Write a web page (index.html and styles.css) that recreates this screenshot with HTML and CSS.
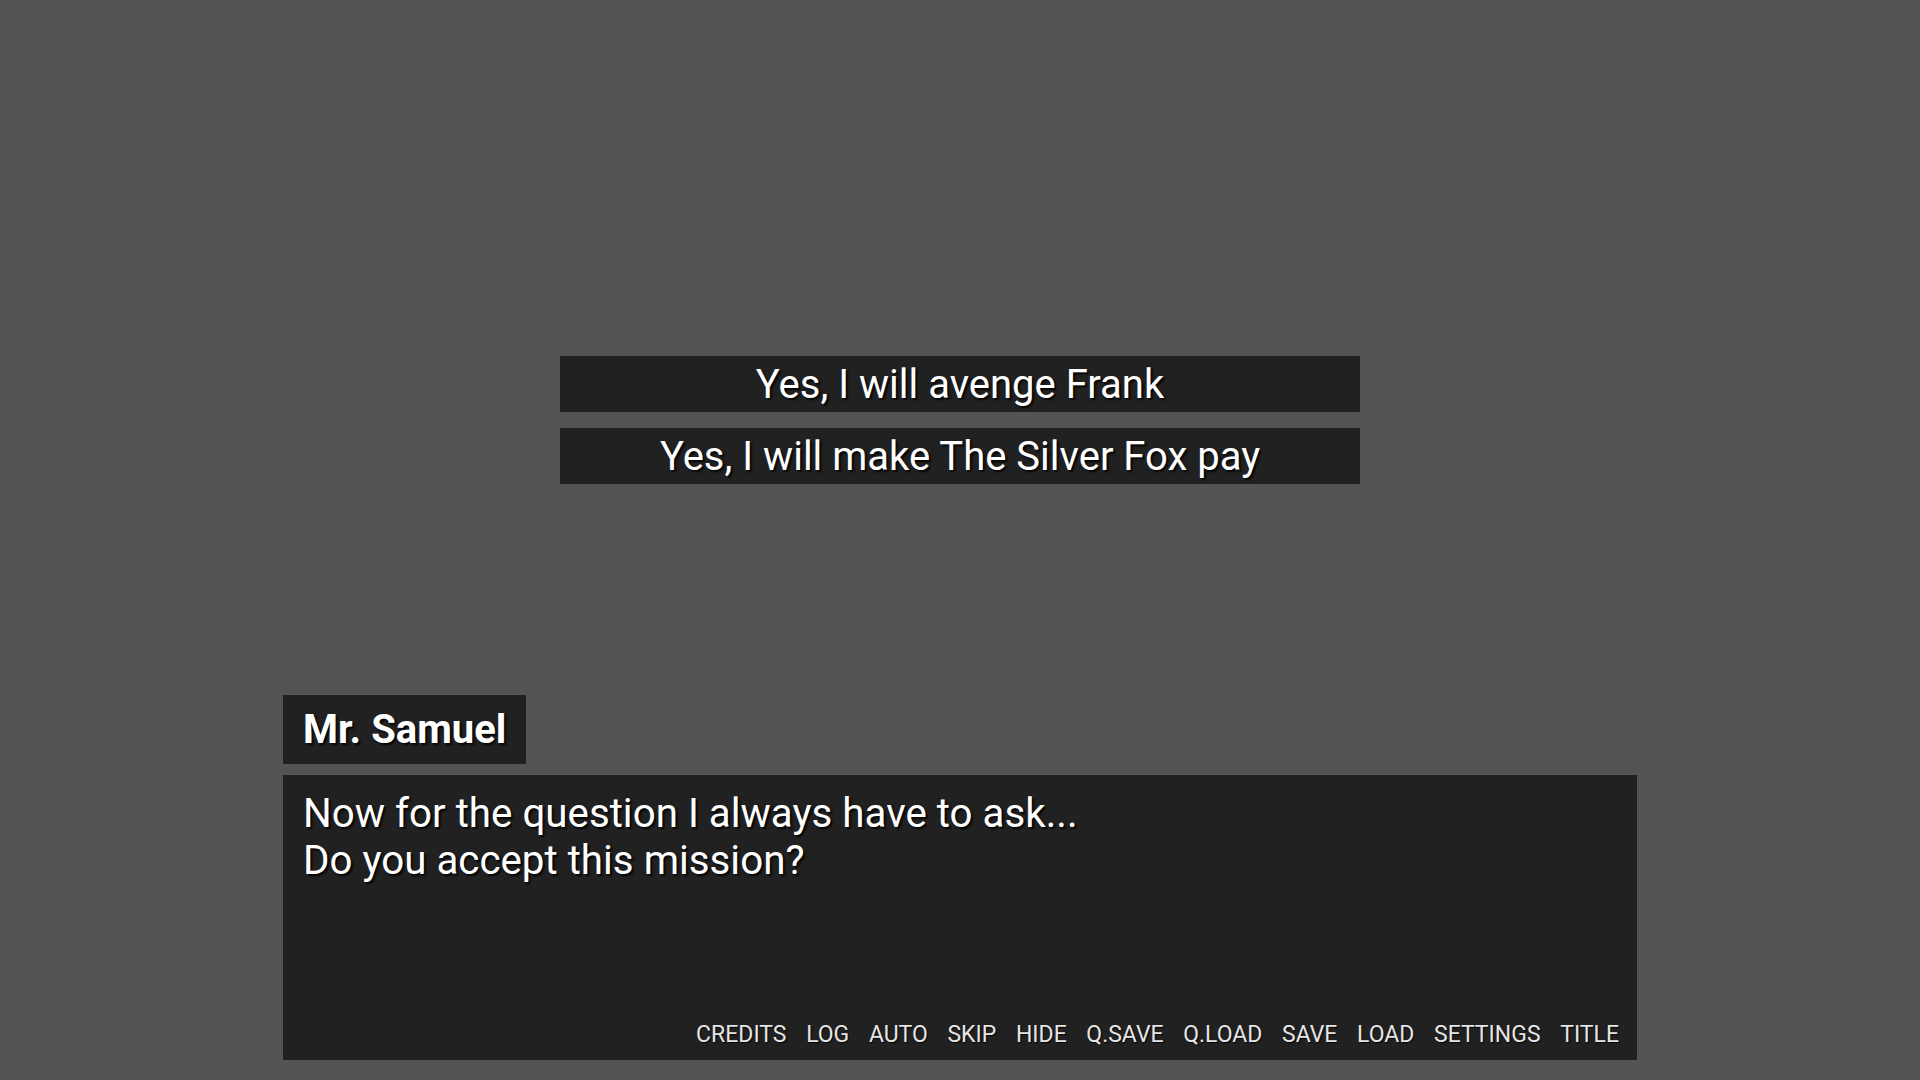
FILE: index.html
```html
<!DOCTYPE html>
<html lang="en">
<head>
<meta charset="utf-8">
<title>Choice</title>
<link rel="stylesheet" href="styles.css">
</head>
<body>
<div class="screen">
  <div class="choices">
    <div class="choice">Yes, I will avenge Frank</div>
    <div class="choice">Yes, I will make The Silver Fox pay</div>
  </div>
  <div class="spacer"></div>
  <div class="say">
    <div class="namebox">Mr. Samuel</div>
    <div class="dialog">
      <div class="what">Now for the question I always have to ask...<br>Do you accept this mission?</div>
      <div class="quick">
        <span class="qbtn">CREDITS</span>
        <span class="qbtn">LOG</span>
        <span class="qbtn">AUTO</span>
        <span class="qbtn">SKIP</span>
        <span class="qbtn">HIDE</span>
        <span class="qbtn">Q.SAVE</span>
        <span class="qbtn">Q.LOAD</span>
        <span class="qbtn">SAVE</span>
        <span class="qbtn">LOAD</span>
        <span class="qbtn">SETTINGS</span>
        <span class="qbtn">TITLE</span>
      </div>
    </div>
  </div>
</div>
</body>
</html>
```

FILE: styles.css
```css
html, body {
  margin: 0;
  padding: 0;
  background: #545454;
}

body {
  font-family: Roboto, "Liberation Sans", sans-serif;
  color: #ffffff;
}

.screen {
  width: 1920px;
  height: 1080px;
  display: flex;
  flex-direction: column;
  align-items: center;
}

.choices {
  margin-top: 356px;
  display: flex;
  flex-direction: column;
  gap: 16px;
  width: 800px;
}

.choice {
  height: 56px;
  background: #212121;
  display: flex;
  align-items: center;
  justify-content: center;
  font-size: 40px;
  text-shadow: 2px 2px 2px rgba(0, 0, 0, 0.85);
}

.spacer {
  flex: 1;
}

.say {
  width: 1354px;
  margin-bottom: 20px;
  display: flex;
  flex-direction: column;
  align-items: flex-start;
  gap: 11px;
}

.namebox {
  height: 69px;
  box-sizing: border-box;
  padding: 0 20px;
  background: #212121;
  display: flex;
  align-items: center;
  font-size: 40px;
  font-weight: 700;
  text-shadow: 2px 2px 2px rgba(0, 0, 0, 0.85);
}

.dialog {
  align-self: stretch;
  height: 285px;
  box-sizing: border-box;
  background: #212121;
  padding: 15px 18px 12px 20px;
  display: flex;
  flex-direction: column;
  justify-content: space-between;
}

.what {
  font-size: 40.3px;
  line-height: 47px;
  text-shadow: 2px 2px 2px rgba(0, 0, 0, 0.85);
}

.quick {
  display: flex;
  justify-content: flex-end;
  gap: 19.6px;
}

.qbtn {
  font-size: 23px;
  color: #e6e6e6;
  text-shadow: 1px 1px 1px rgba(0, 0, 0, 0.85);
}
```
